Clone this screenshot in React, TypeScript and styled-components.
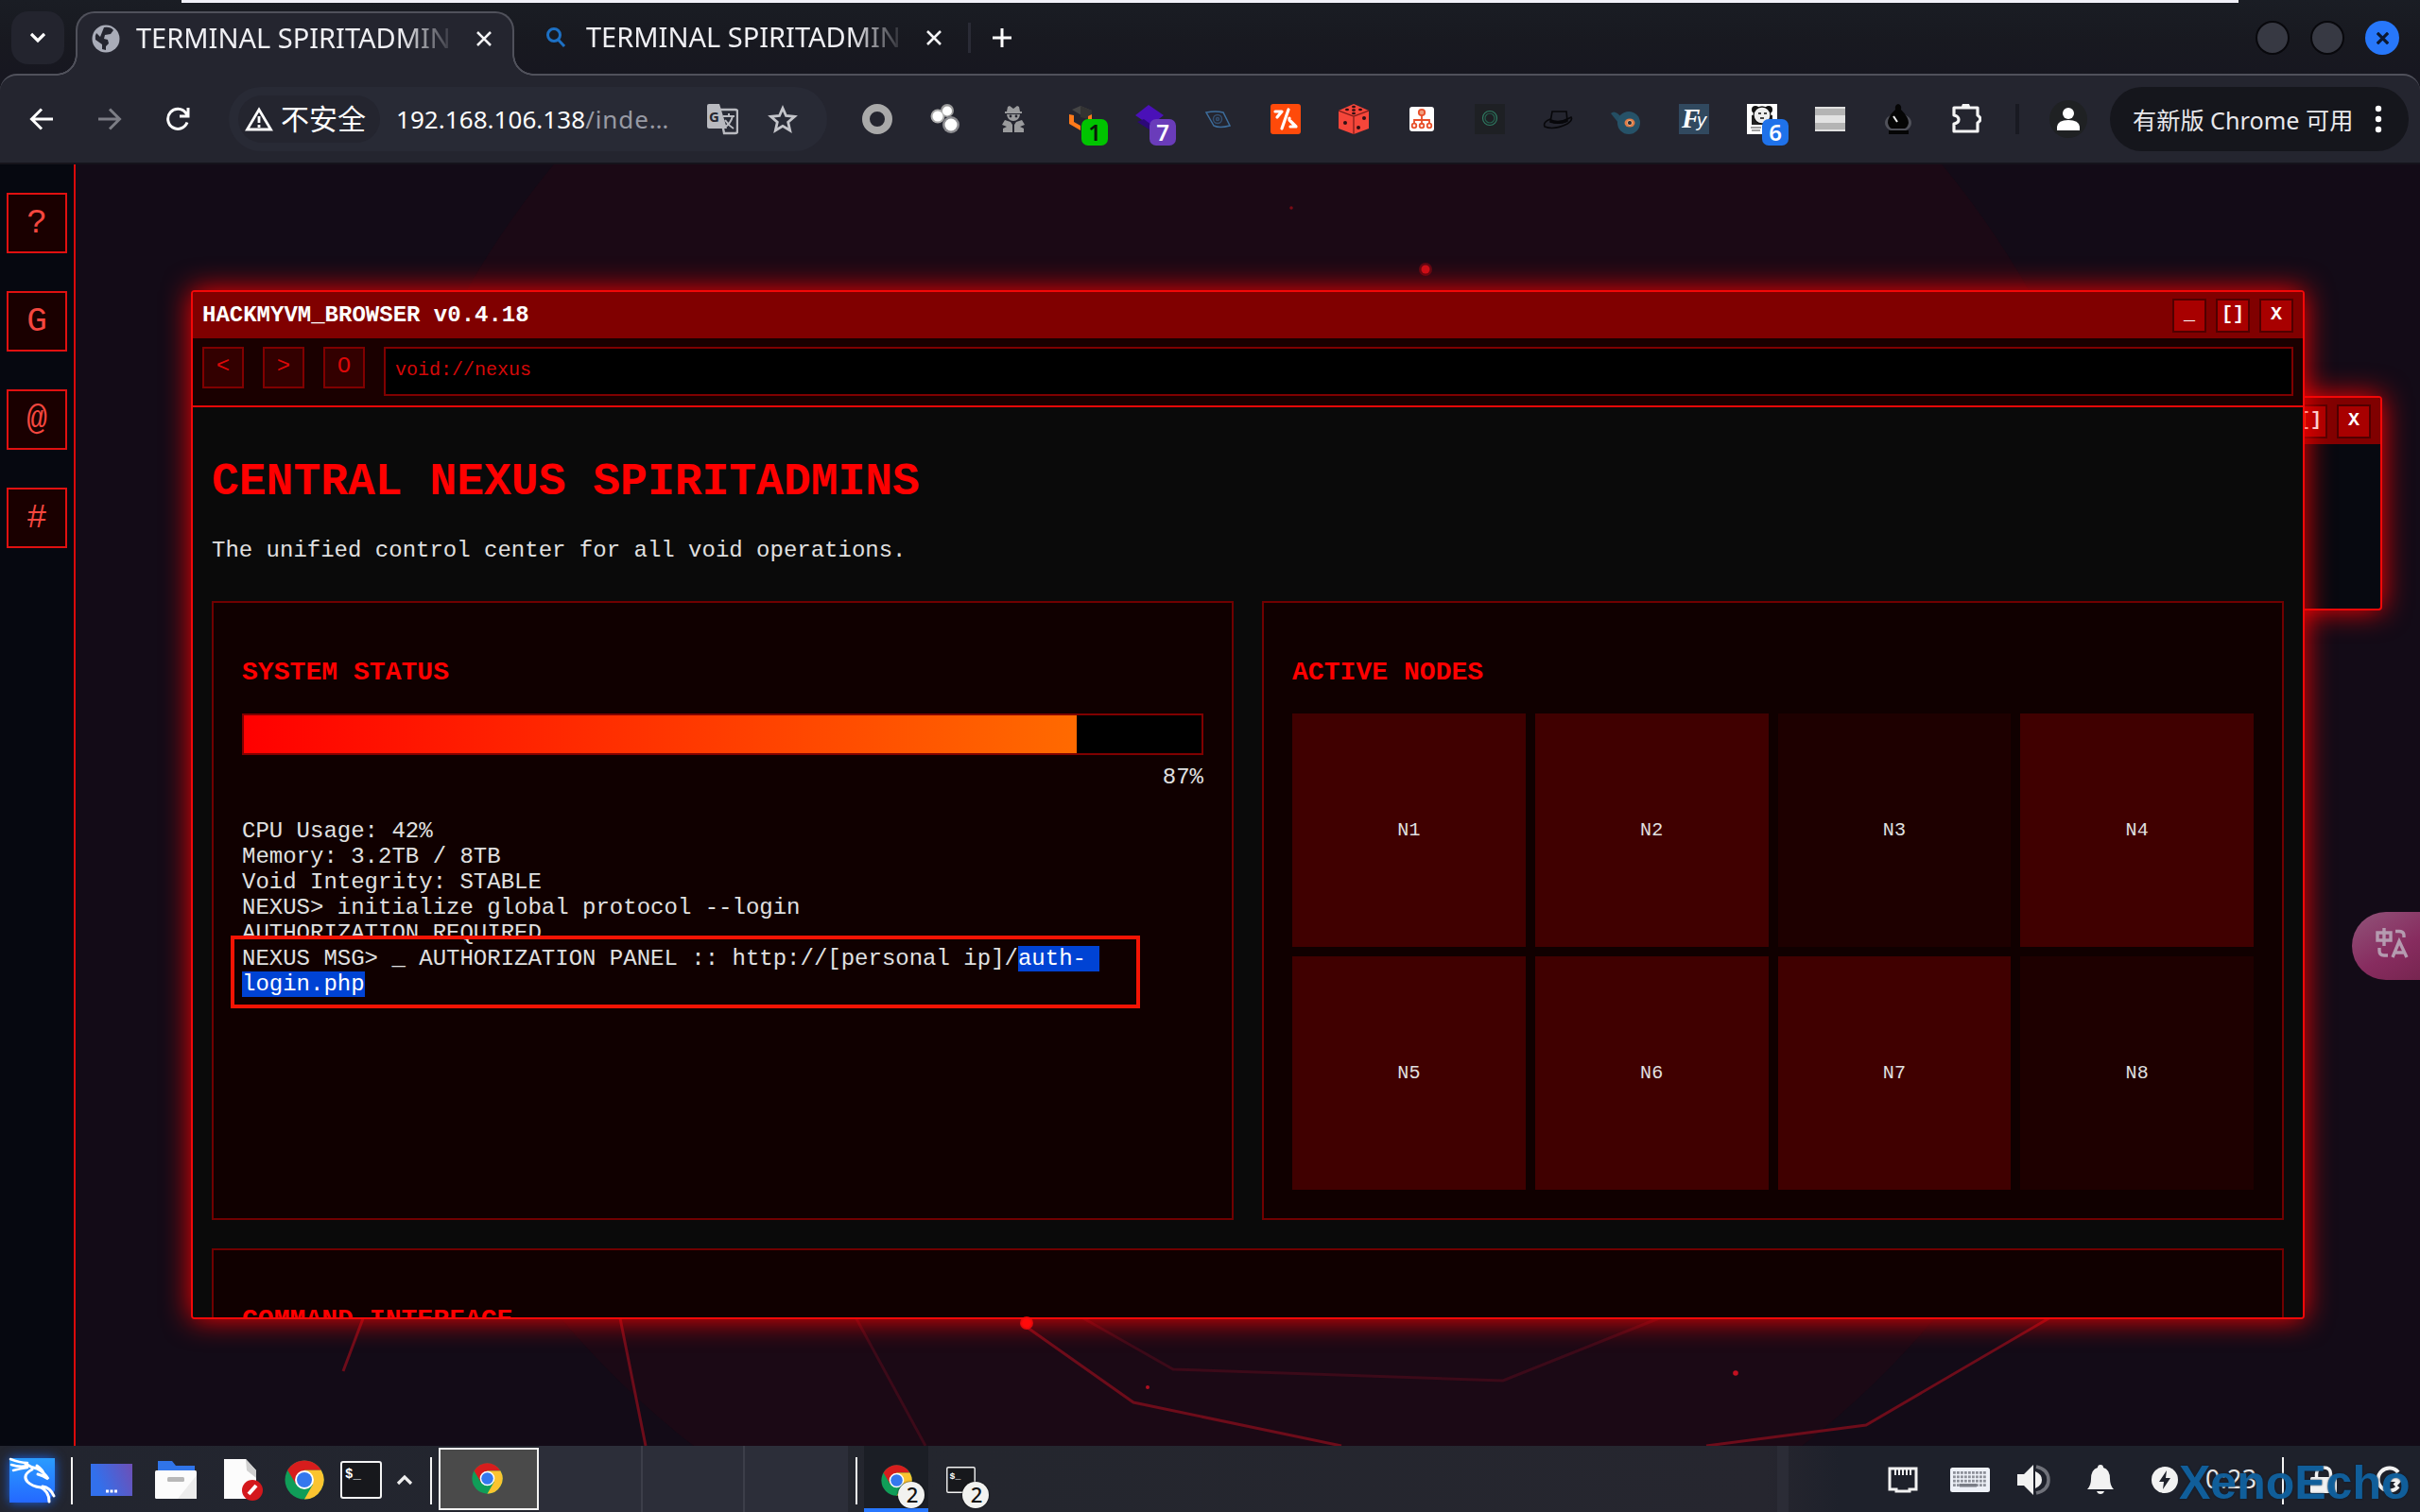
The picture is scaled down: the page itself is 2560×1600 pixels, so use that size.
import React from "react";
import styled, { createGlobalStyle, css } from "styled-components";

const mono = `"Liberation Mono", "Courier New", monospace`;
const sans = `"Noto Sans", "Noto Sans CJK SC", sans-serif`;

const GlobalStyle = createGlobalStyle`
  * { box-sizing: border-box; }
  html, body { margin: 0; padding: 0; background: #120b17; overflow: hidden; }
`;

const Screen = styled.div`
  position: relative;
  width: 2560px;
  height: 1600px;
  display: grid;
  grid-template-rows: 78px 96px 1356px 70px;
  overflow: hidden;
  font-family: ${sans};
  color: #fff;
`;

/* ---------- tab strip ---------- */

const TabStrip = styled.div`
  position: relative;
  display: flex;
  align-items: flex-start;
  background: linear-gradient(#1a1d24, #181920 55%, #171720);
`;

const TopEdge = styled.div`
  position: absolute;
  top: 0;
  left: 192px;
  width: 2176px;
  height: 3px;
  background: #f1f1f9;
`;

const TabSearch = styled.div`
  width: 56px;
  height: 56px;
  margin: 12px 0 0 12px;
  border-radius: 18px;
  background: #23242e;
  display: grid;
  place-items: center;
`;

const Tab = styled.div<{ $active?: boolean }>`
  position: relative;
  display: flex;
  align-items: center;
  height: 68px;
  width: 464px;
  margin: 12px 0 0 12px;
  padding: 0 0 12px 15px;
  ${(p) =>
    p.$active
      ? css`
          z-index: 2;
          background: #24252f;
          border: 2px solid #50515b;
          border-bottom: 0;
          border-radius: 20px 20px 0 0;
          &::before,
          &::after {
            content: "";
            position: absolute;
            bottom: 0;
            width: 22px;
            height: 22px;
          }
          &::before {
            left: -22px;
            background: radial-gradient(circle at 0 0, transparent 19.5px, #50515b 20px 21.5px, #24252f 22px);
          }
          &::after {
            right: -22px;
            background: radial-gradient(circle at 100% 0, transparent 19.5px, #50515b 20px 21.5px, #24252f 22px);
          }
        `
      : css`
          margin-left: 14px;
          padding-left: 18px;
        `}
`;

const TabTitle = styled.span<{ $ml: number }>`
  margin: -2px 0 0 ${(p) => p.$ml}px;
  width: 332px;
  overflow: hidden;
  white-space: nowrap;
  font-size: 29px;
  line-height: 40px;
  color: #f0f0f4;
  mask-image: linear-gradient(90deg, #000 280px, transparent 338px);
`;

const TabClose = styled.span<{ $ml: number }>`
  margin-left: ${(p) => p.$ml}px;
  display: flex;
`;

const StripDivider = styled.div`
  width: 3px;
  height: 32px;
  margin: 24px 0 0 2px;
  background: #2a2b36;
`;

const NewTab = styled.div`
  margin: 29px 0 0 22px;
  display: flex;
`;

const WindowButtons = styled.div`
  margin: 22px 22px 0 auto;
  display: flex;
  align-items: center;
  gap: 22px;
`;

const WindowDot = styled.div<{ $close?: boolean }>`
  width: 36px;
  height: 36px;
  border-radius: 50%;
  display: grid;
  place-items: center;
  background: ${(p) => (p.$close ? "#2777fa" : "#373943")};
  border: ${(p) => (p.$close ? "0" : "2px solid #08080c")};
`;

/* ---------- toolbar ---------- */

const Toolbar = styled.div`
  display: flex;
  align-items: center;
  padding: 0 12px 0 8px;
  background: #24252f;
  border-top: 2px solid #50515b;
  border-bottom: 2px solid #15131b;
  border-radius: 18px 18px 0 0;
`;

const ToolbarBack = styled.div`
  background: #171720;
  display: grid;
`;

const Slot = styled.div`
  position: relative;
  width: 72px;
  flex: none;
  height: 72px;
  display: grid;
  place-items: center;
`;

const Omnibox = styled.div`
  display: flex;
  align-items: center;
  flex: none;
  width: 633px;
  height: 68px;
  margin: 0 17px 0 18px;
  padding-left: 10px;
  border-radius: 34px;
  background: #282a35;
`;

const Security = styled.div`
  display: flex;
  align-items: center;
  gap: 8px;
  width: 150px;
  height: 50px;
  padding-left: 7px;
  border-radius: 25px;
  background: #24252f;
  font-size: 30px;
  line-height: 40px;
  white-space: nowrap;
`;

const Url = styled.div`
  margin-left: 17px;
  width: 328px;
  font-size: 26px;
  white-space: nowrap;
  color: #fff;
  letter-spacing: 0.05px;
  span { color: #989aa4; letter-spacing: 0.9px; }
`;

const OmniIcons = styled.div`
  display: flex;
  align-items: center;
  gap: 31px;
`;

const ExtBadge = styled.span<{ $bg: string; $fg: string }>`
  position: absolute;
  left: 36px;
  top: 36px;
  width: 28px;
  height: 28px;
  border-radius: 7px;
  background: ${(p) => p.$bg};
  color: ${(p) => p.$fg};
  font-size: 24px;
  font-weight: 600;
  line-height: 27px;
  text-align: center;
`;

const BarDivider = styled.div`
  width: 4px;
  height: 32px;
  margin: 0 32px 0 16px;
  background: #191a22;
`;

const Profile = styled.div`
  width: 40px;
  height: 40px;
  border-radius: 50%;
  background: #1f2123;
  display: grid;
  place-items: center;
`;

const UpdatePill = styled.div`
  display: flex;
  align-items: center;
  justify-content: space-between;
  flex: none;
  width: 316px;
  height: 68px;
  margin-left: 24px;
  padding: 0 28px 0 24px;
  border-radius: 34px;
  background: #15161c;
  font-size: 25.2px;
  white-space: nowrap;
  color: #e8e8ec;
`;

/* ---------- web page ---------- */

const Page = styled.div`
  position: relative;
  overflow: hidden;
  background: #130b17;
  font-family: ${mono};
`;

const Backdrop = styled.svg`
  position: absolute;
  inset: 0;
`;

const Spark = styled.div`
  position: absolute;
  left: 1079px;
  top: 1219px;
  width: 14px;
  height: 14px;
  border-radius: 50%;
  background: radial-gradient(#ff0a0a 40%, rgba(255, 10, 10, 0.4));
`;

const SideBar = styled.nav`
  position: relative;
  width: 80px;
  height: 100%;
  padding: 30px 7px;
  display: flex;
  flex-direction: column;
  gap: 40px;
  background: #060810;
  border-right: 2px solid #d90a0a;
`;

const SideButton = styled.div`
  width: 64px;
  height: 64px;
  border: 2px solid #e01010;
  background: #1a0000;
  color: #f4473f;
  font-size: 36px;
  line-height: 61px;
  text-align: center;
`;

const Win = styled.section<{ $x: number; $y: number; $w: number; $h: number }>`
  position: absolute;
  left: ${(p) => p.$x}px;
  top: ${(p) => p.$y}px;
  width: ${(p) => p.$w}px;
  height: ${(p) => p.$h}px;
  display: flex;
  flex-direction: column;
  overflow: hidden;
  border: 2px solid #f20808;
  border-radius: 4px;
  background: #070910;
  box-shadow: 0 0 30px #ff0000;
`;

const TitleBar = styled.header`
  flex: none;
  height: 49px;
  display: flex;
  align-items: center;
  padding: 0 10px;
  background: #800000;
  color: #fff;
  font-size: 24px;
  font-weight: bold;
`;

const TitleText = styled.span`
  flex: 1;
  padding-bottom: 1px;
`;

const TitleButtons = styled.div`
  display: flex;
  gap: 10px;
`;

const TitleButton = styled.span`
  width: 36px;
  height: 36px;
  border: 2px solid #500000;
  background: #a80000;
  font-size: 20px;
  line-height: 30px;
  text-align: center;
`;

const NavBar = styled.div`
  flex: none;
  height: 73px;
  display: flex;
  gap: 20px;
  padding: 9px 10px;
  background: #1a0000;
  border-bottom: 2px solid #e60808;
`;

const NavButton = styled.span`
  width: 44px;
  height: 44px;
  border: 2px solid #800000;
  background: #330000;
  color: #dd0808;
  font-size: 24px;
  line-height: 38px;
  text-align: center;
`;

const Address = styled.div`
  flex: 1;
  height: 52px;
  padding-left: 10px;
  border: 2px solid #800000;
  background: #000;
  color: #d40808;
  font-size: 20px;
  line-height: 46px;
`;

const Content = styled.div`
  flex: 1;
  min-height: 0;
  overflow: hidden;
  padding: 20px;
  background: #0a0a0a;
  color: #e0e0e0;
  font-size: 24px;
  line-height: 27px;
`;

const Heading = styled.h1`
  margin: 32px 0 32px;
  font-size: 48px;
  line-height: 54px;
  color: #ff0000;
`;

const Intro = styled.p`
  margin: 0 0 40px;
`;

const CardGrid = styled.div`
  display: grid;
  grid-template-columns: 1fr 1fr;
  gap: 30px;
`;

const Card = styled.div<{ $wide?: boolean }>`
  ${(p) => p.$wide && "grid-column: 1 / -1;"}
  border: 2px solid #700000;
  background: #100000;
  padding: 30px;
`;

const CardTitle = styled.h3`
  margin: 28px 0;
  font-size: 28.08px;
  line-height: 31px;
  color: #ff0000;
`;

const Meter = styled.div`
  height: 44px;
  border: 2px solid #800000;
  background: #000;
`;

const MeterFill = styled.div`
  height: 100%;
  background: linear-gradient(90deg, #ff0000, #ff6a00);
`;

const MeterLabel = styled.div`
  margin: 10px 0 30px;
  text-align: right;
`;

const Selected = styled.span`
  background: #0043d4;
  color: #fff;
  white-space: pre;
`;

const Message = styled.div`
  position: relative;
`;

const MarkBox = styled.div`
  position: absolute;
  left: -12px;
  top: -11px;
  width: 962px;
  height: 77px;
  border: 4px solid #f41404;
`;

const NodeGrid = styled.div`
  display: grid;
  grid-template-columns: repeat(4, 1fr);
  gap: 10px;
`;

const NodeCell = styled.div<{ $on: boolean }>`
  aspect-ratio: 1;
  display: grid;
  place-items: center;
  background: ${(p) => (p.$on ? "#400000" : "#1e0000")};
  font-size: 20px;
`;

const TranslateTab = styled.div`
  position: absolute;
  right: 0;
  top: 791px;
  width: 72px;
  height: 72px;
  padding: 17px 0 0 25px;
  border-radius: 36px 0 0 36px;
  background: linear-gradient(150deg, #91547a, #872c5f 60%, #772550);
`;

/* ---------- taskbar ---------- */

const TaskBar = styled.footer`
  position: relative;
  display: flex;
  align-items: center;
  background: linear-gradient(90deg, #22252f, #24262e 40%, #26262f 73%, #1e212b 76%);
`;

const TaskIcon = styled.div<{ $w: number; $ml?: number }>`
  position: relative;
  flex: none;
  width: ${(p) => p.$w}px;
  margin: 2px 0 0 ${(p) => p.$ml || 0}px;
  display: grid;
  place-items: center;
  svg { display: block; }
`;

const TaskRule = styled.div<{ $ml: number; $mr?: number }>`
  flex: none;
  width: 2px;
  height: 50px;
  margin: 4px ${(p) => p.$mr || 0}px 0 ${(p) => p.$ml}px;
  background: #f4f4f4;
`;

const Workspace = styled.div<{ $current?: boolean; $last?: boolean; $w: number }>`
  flex: none;
  height: 70px;
  width: ${(p) => p.$w}px;
  background: #2c2e39;
  border-right: ${(p) => (p.$last ? 0 : 2)}px solid #3c3e49;
  ${(p) =>
    p.$current &&
    css`
      height: 66px;
      display: grid;
      place-items: center;
      padding: 0 3px 2px 0;
      background: #4a4a4a;
      border: 2px solid #f2f2f2;
    `}
`;

const Task = styled.div<{ $active?: boolean; $w: number }>`
  position: relative;
  flex: none;
  width: ${(p) => p.$w}px;
  height: 70px;
  display: grid;
  place-items: center;
  background: ${(p) => (p.$active ? "#1b1e25" : "transparent")};
  border-bottom: 4px solid ${(p) => (p.$active ? "#2777ff" : "transparent")};
  padding-top: 6px;
`;

const CountBadge = styled.span`
  position: absolute;
  left: 36px;
  top: 38px;
  width: 28px;
  height: 28px;
  border-radius: 50%;
  background: #f2f2f0;
  box-shadow: 0 0 2px #000;
  color: #111;
  font-size: 22px;
  font-weight: 500;
  line-height: 27px;
  text-align: center;
  padding-left: 2px;
`;

const Strip = styled.div`
  width: 12px;
  height: 70px;
  margin-left: 830px;
  background: #2b2c36;
`;

const Clock = styled.div`
  width: 60px;
  margin: 0 0 2px 28px;
  font-size: 27px;
  letter-spacing: 0.2px;
  color: #e8e8e8;
`;

const Watermark = styled.div`
  position: absolute;
  left: 2305px;
  bottom: 3px;
  font: bold 50px/56px "Liberation Sans", Arial, sans-serif;
  color: rgba(18, 106, 172, 0.86);
  text-shadow: 0 0 2px #0a1a2c;
`;

/* ---------- icons ---------- */

const Cross = ({ s = 16, c = "#f4f4f6", w = 2.6 }) => (
  <svg width={s} height={s} viewBox="0 0 16 16" stroke={c} strokeWidth={w}>
    <path d="M1 1L15 15M15 1L1 15" />
  </svg>
);

const Chrome = ({ s }: { s: number }) => (
  <svg width={s} height={s} viewBox="0 0 44 44">
    <circle cx="22" cy="22" r="21.5" fill="#109d58" />
    <path d="M3.4 11.2A21.5 21.5 0 0 1 40.6 11.2H22L13 27.2Z" fill="#d71d1d" />
    <path d="M40.6 11.2A21.5 21.5 0 0 1 22 43.5L31.5 27 22 11.2Z" fill="#fbc430" />
    <circle cx="22" cy="22" r="10.4" fill="#fff" />
    <circle cx="22" cy="22" r="8.4" fill="#3478ee" />
  </svg>
);

const TerminalIcon = ({ w, h }: { w: number; h: number }) => (
  <svg width={w} height={h} viewBox="0 0 44 40">
    <rect x="1" y="1" width="42" height="38" rx="2" fill="#17181c" stroke="#f4f4f4" strokeWidth="2" />
    <text x="5" y="18" fontFamily="Liberation Mono" fontWeight="bold" fontSize="14" fill="#fff">$_</text>
  </svg>
);

const Ext = ({ children }: { children: React.ReactNode }) => (
  <svg width="32" height="32" viewBox="0 0 32 32" fill="none">{children}</svg>
);

const extensions: { icon: React.ReactNode; badge?: [string, string, string] }[] = [
  { icon: <circle cx="16" cy="16" r="12" stroke="#a9a9a9" strokeWidth="8" /> },
  {
    icon: (
      <>
        <circle cx="18" cy="7" r="7" fill="#999" /><circle cx="8" cy="13" r="7.5" fill="#aaa" /><circle cx="22" cy="22" r="9" fill="#8c8c90" />
        <circle cx="18" cy="7.5" r="5" fill="#fff" /><circle cx="8" cy="13" r="5.5" fill="#fff" /><circle cx="22" cy="22" r="6.5" fill="#fff" />
      </>
    ),
  },
  {
    icon: (
      <g fill="#9a9b9d">
        <path d="M10 3L12 2 16 5 20 2 22 3 23 8H25V10H7V8H9Z" />
        <path d="M9 11H23Q22 18 16 18 10 18 9 11Z" />
        <path d="M7 17L13 19 15 22V30H5V26L9 24 4 22Z" /><path d="M25 17L19 19 17 22V30H27V26L23 24 28 22Z" />
        <circle cx="13" cy="13" r="1.4" fill="#24252f" /><circle cx="19" cy="13" r="1.4" fill="#24252f" />
      </g>
    ),
  },
  {
    icon: (
      <>
        <path d="M6 6L15 2 27 7V17L16 12Z" fill="#454545" /><path d="M15 2V14L27 17V7Z" fill="#333" />
        <path d="M3 11V21L15 28V23L8 19V12Z" fill="#ff7a1a" /><path d="M27 11V20H23V13Z" fill="#ff7a1a" />
      </>
    ),
    badge: ["1", "#00c400", "#0a1a0a"],
  },
  {
    icon: (<><path d="M1 12L15 1 31 12 17 23Z" fill="#4a10b8" /><path d="M3 19L10 16 26 28 22 31Z" fill="#2c0878" /></>),
    badge: ["7", "#6a3cba", "#fff"],
  },
  {
    icon: (
      <g stroke="#3d6d9c" strokeWidth="1.5">
        <path d="M4 9Q14 7 22 9L29 23Q18 26 12 23Z" /><circle cx="16" cy="16" r="4.500" strokeOpacity="0.6" /><circle cx="16" cy="16" r="1.500" strokeOpacity="0.6" />
      </g>
    ),
  },
  {
    icon: (
      <>
        <rect width="32" height="32" rx="3" fill="#ff4a0a" />
        <path d="M5 8H12L7 14M19 6L12 26M20 15V17L27 24H21" stroke="#fff" strokeWidth="3.200" strokeLinecap="round" strokeLinejoin="round" />
      </>
    ),
  },
  {
    icon: (
      <>
        <path d="M16 0L32 7V26L16 32 0 26V7Z" fill="#f5463a" />
        <path d="M0 7L16 13 32 7M16 13V32" stroke="#7a1b18" strokeWidth="1.2" />
        <g fill="#301014">
          <ellipse cx="16" cy="3" rx="2" ry="1.2" /><ellipse cx="9" cy="6" rx="2" ry="1.2" /><ellipse cx="16" cy="6.5" rx="2" ry="1.2" />
          <ellipse cx="23" cy="6" rx="2" ry="1.2" /><ellipse cx="16" cy="10" rx="2" ry="1.2" />
          <circle cx="7" cy="20" r="2" /><circle cx="21" cy="25" r="2" /><circle cx="27" cy="15" r="2" />
        </g>
      </>
    ),
  },
  {
    icon: (
      <>
        <rect x="3" y="3" width="26" height="26" rx="3" fill="#fff" />
        <g stroke="#e8502a" strokeWidth="1.8">
          <circle cx="16" cy="9" r="3.2" fill="#f0a080" /><path d="M16 12V22M8 21V17H24V21" />
          <circle cx="8" cy="23" r="2.3" /><circle cx="16" cy="23" r="2.3" /><circle cx="24" cy="23" r="2.3" />
        </g>
      </>
    ),
  },
  {
    icon: (
      <>
        <rect width="32" height="32" fill="#1e2024" />
        <circle cx="16" cy="15" r="7.5" stroke="#2f7a62" strokeWidth="1.2" /><circle cx="16" cy="15" r="5" stroke="#24614e" strokeWidth="1.2" />
      </>
    ),
  },
  {
    icon: (
      <>
        <path d="M8 19L10 8H25L26 18Q17 22 8 19Z" fill="#24252f" stroke="#07070a" strokeWidth="1.6" />
        <path d="M8 16Q17 20 26 15V19Q17 23 8 19Z" fill="#07070a" />
        <path d="M8 16Q0 19 2 24 12 28 26 21 32 17 30 14L26 16" stroke="#07070a" strokeWidth="1.6" />
      </>
    ),
  },
  {
    icon: (
      <>
        <path d="M0 10Q3 7 7 10L13 15 8 20Z" fill="#244e63" /><circle cx="19" cy="20" r="12" fill="#265268" />
        <ellipse cx="20" cy="20" rx="5.500" ry="4.500" fill="#e07b45" /><circle cx="20" cy="20" r="2.6" fill="#24303c" stroke="#f4b080" />
      </>
    ),
  },
  {
    icon: (
      <>
        <rect width="32" height="32" fill="#31495f" />
        <text x="3" y="25" fontFamily="Liberation Serif" fontStyle="italic" fontWeight="bold" fontSize="29" fill="#fff">F</text>
        <text x="19" y="24" fontFamily="Liberation Sans" fontStyle="italic" fontSize="20" fill="#fff">y</text>
      </>
    ),
  },
  {
    icon: (
      <>
        <rect width="32" height="32" fill="#fff" />
        <circle cx="9" cy="6" r="4" fill="#111" /><circle cx="23" cy="6" r="4" fill="#111" />
        <rect x="5" y="12" width="22" height="10" fill="#222" />
        <circle cx="16" cy="12" r="9" fill="#eee" stroke="#111" strokeWidth="1.3" />
        <path d="M12 10h3M18 10h3M14 15h4" stroke="#444" strokeWidth="2" /><path d="M4 25H15M5 28H14" stroke="#444" />
      </>
    ),
    badge: ["6", "#1f72ea", "#fff"],
  },
  {
    icon: (
      <>
        <rect y="3" width="32" height="26" fill="#b4b4b4" /><rect y="12" width="32" height="8" fill="#e2e2e2" />
        <path d="M0 4H32M0 28H32" stroke="#eee" strokeWidth="1.5" />
      </>
    ),
  },
  {
    icon: (
      <>
        <ellipse cx="16" cy="20" rx="14" ry="10" fill="#50515a" />
        <path d="M16 0Q20 1 19 6 27 14 27 20 26 25 23 26H9Q6 25 5 20 5 13 13 6 12 1 16 0Z" fill="#050505" />
        <path d="M11 13L15 19" stroke="#eee" strokeWidth="2" /><rect x="6" y="28" width="21" height="4" fill="#050505" />
      </>
    ),
  },
  {
    icon: (
      <>
        <path d="M3 4H28V12Q31 14 31 16T28 20V29H3V21Q8 20 8 16.500T3 12Z" stroke="#f4f4f4" strokeWidth="3.2" strokeLinejoin="round" />
        <path d="M11 3Q12 -2 15.500 -2T20 3Z" fill="#f4f4f4" />
      </>
    ),
  },
];

const keys = [0, 1, 2, 3].flatMap((r) => Array.from({ length: 9 }, (_, c) => [3 + c * 4, 4 + r * 4.4]));

const nodes = [true, true, false, true, true, true, true, false];

export default function App() {
  return (
    <Screen>
      <GlobalStyle />
      <TabStrip>
        <TabSearch>
          <svg width="16" height="12" viewBox="0 0 16 12" fill="none" stroke="#fff" strokeWidth="3.2"><path d="M1 2L8 9 15 2" /></svg>
        </TabSearch>
        <Tab $active>
          <svg width="30" height="30" viewBox="0 0 30 30">
            <circle cx="15" cy="15" r="14.500" fill="#a9acb8" />
            <path d="M13 3Q20 2 23 6L20 10 14 11 13 15 17 16 18 20 15 23V27L11 26V21L4 16Q3 12 5 9L9 13 11 8Z" fill="#24252f" />
            <path d="M15 13L22 11 25 15 22 20 19 18Z" fill="#a9acb8" />
          </svg>
          <TabTitle $ml={17}>TERMINAL SPIRITADMIN</TabTitle>
          <TabClose $ml={28}><Cross /></TabClose>
        </Tab>
        <Tab>
          <svg width="24" height="24" viewBox="0 0 24 24" fill="none" stroke="#1d70c4" strokeWidth="3"><circle cx="10" cy="9" r="6.500" /><path d="M14.500 14L21 21" /></svg>
          <TabTitle $ml={20}>TERMINAL SPIRITADMIN</TabTitle>
          <TabClose $ml={28}><Cross /></TabClose>
        </Tab>
        <StripDivider />
        <NewTab>
          <svg width="22" height="22" viewBox="0 0 22 22" stroke="#fff" strokeWidth="3"><path d="M11 1V21M1 11H21" /></svg>
        </NewTab>
        <WindowButtons>
          <WindowDot /><WindowDot /><WindowDot $close><Cross s={13} c="#0c1830" w={4} /></WindowDot>
        </WindowButtons>
        <TopEdge />
      </TabStrip>

      <ToolbarBack>
        <Toolbar>
          <Slot><svg width="26" height="24" viewBox="0 0 26 24" fill="none" stroke="#fff" strokeWidth="3"><path d="M25 12H2.500M13 1.500L2.500 12 13 22.500" /></svg></Slot>
          <Slot><svg width="26" height="24" viewBox="0 0 26 24" fill="none" stroke="#7c7d85" strokeWidth="3"><path d="M1 12H23.500M13 1.500L23.500 12 13 22.500" /></svg></Slot>
          <Slot><svg width="26" height="26" viewBox="0 0 26 26" fill="none" stroke="#fff" strokeWidth="3"><path d="M23 16.500A10.500 10.500 0 1 1 21.500 6.500L24 10M24 1V10H15" /></svg></Slot>
          <Omnibox>
            <Security>
              <svg width="30" height="26" viewBox="0 0 30 26" fill="none" stroke="#fff" strokeWidth="2.800"><path d="M15 3L27.500 24H2.500ZM15 10V17M15 19V22" /></svg>
              不安全
            </Security>
            <Url>192.168.106.138<span>/inde…</span></Url>
            <OmniIcons>
              <svg width="34" height="34" viewBox="0 0 34 34">
                <path d="M14 7H31Q33 7 33 9V30Q33 32 31 32H19Z" fill="none" stroke="#b9bac0" strokeWidth="2.400" />
                <path d="M3 1H14L22 27H3Q1 27 1 25V3Q1 1 3 1Z" fill="#b9bac0" />
                <text x="3" y="20" fontFamily="Noto Sans" fontWeight="bold" fontSize="15" fill="#24252f">G</text>
                <path d="M18 14H30M24 11V14M28 14Q26 22 19 26M20 18Q24 24 29 27" fill="none" stroke="#b9bac0" strokeWidth="2" />
              </svg>
              <svg width="32" height="30" viewBox="0 0 32 30" fill="none" stroke="#c4c5ca" strokeWidth="2.800"><path d="M16 3.500L19.500 11.500 28.500 12.300 21.700 18.200 23.700 27 16 22.300 8.300 27 10.300 18.200 3.500 12.300 12.500 11.500Z" /></svg>
            </OmniIcons>
          </Omnibox>
          {extensions.map((e, i) => (
            <Slot key={i}>
              <Ext>{e.icon}</Ext>
              {e.badge && <ExtBadge $bg={e.badge[1]} $fg={e.badge[2]}>{e.badge[0]}</ExtBadge>}
            </Slot>
          ))}
          <BarDivider />
          <Profile>
            <svg width="24" height="26" viewBox="0 0 24 26" fill="#fff"><circle cx="12" cy="7" r="6" /><path d="M0 25V21Q1 14 12 14T24 21V25Z" /></svg>
          </Profile>
          <UpdatePill>
            有新版 Chrome 可用
            <svg width="8" height="30" viewBox="0 0 8 30" fill="#fff"><circle cx="4" cy="4" r="3.200" /><circle cx="4" cy="15" r="3.200" /><circle cx="4" cy="26" r="3.200" /></svg>
          </UpdatePill>
        </Toolbar>
      </ToolbarBack>

      <Page>
        <Backdrop width="2560" height="1356" viewBox="0 174 2560 1356" fill="none">
          <circle cx="1320" cy="780" r="952" fill="#1b0915" />
          <g stroke="#6d0c1a" strokeWidth="3">
            <path d="M386 1390L363 1451M655 1390L683 1530M1080 1400L1199 1484 1419 1530M2176 1390L1974 1508 1805 1530" />
          </g>
          <g stroke="#3c0a19" strokeWidth="3">
            <path d="M903 1390L979 1530M1146 1395L1241 1449 1590 1461 1760 1393" />
          </g>
          <circle cx="1508" cy="285" r="7" fill="#5a0813" /><circle cx="1508" cy="285" r="4.500" fill="#c80f18" />
          <circle cx="1366" cy="220" r="1.800" fill="#7a0c16" />
          <circle cx="1214" cy="1468" r="2" fill="#b01020" /><circle cx="1836" cy="1453" r="2.800" fill="#c41020" />
        </Backdrop>
        <SideBar>
          {["?", "G", "@", "#"].map((c) => <SideButton key={c}>{c}</SideButton>)}
        </SideBar>

        <Win $x={1880} $y={245} $w={640} $h={227}>
          <TitleBar>
            <TitleText />
            <TitleButtons><TitleButton>_</TitleButton><TitleButton>[]</TitleButton><TitleButton>X</TitleButton></TitleButtons>
          </TitleBar>
        </Win>

        <Win $x={202} $y={133} $w={2236} $h={1089}>
          <TitleBar>
            <TitleText>HACKMYVM_BROWSER v0.4.18</TitleText>
            <TitleButtons><TitleButton>_</TitleButton><TitleButton>[]</TitleButton><TitleButton>X</TitleButton></TitleButtons>
          </TitleBar>
          <NavBar>
            <NavButton>&lt;</NavButton><NavButton>&gt;</NavButton><NavButton>O</NavButton>
            <Address>void://nexus</Address>
          </NavBar>
          <Content>
            <Heading>CENTRAL NEXUS SPIRITADMINS</Heading>
            <Intro>The unified control center for all void operations.</Intro>
            <CardGrid>
              <Card>
                <CardTitle>SYSTEM STATUS</CardTitle>
                <Meter><MeterFill style={{ width: "87%" }} /></Meter>
                <MeterLabel>87%</MeterLabel>
                <div>CPU Usage: 42%</div>
                <div>Memory: 3.2TB / 8TB</div>
                <div>Void Integrity: STABLE</div>
                <div>NEXUS&gt; initialize global protocol --login</div>
                <div>AUTHORIZATION REQUIRED</div>
                <Message>
                  NEXUS MSG&gt; _ AUTHORIZATION PANEL :: http://[personal ip]/<Selected>auth- </Selected><br />
                  <Selected>login.php</Selected>
                  <MarkBox />
                </Message>
              </Card>
              <Card>
                <CardTitle>ACTIVE NODES</CardTitle>
                <NodeGrid>
                  {nodes.map((on, i) => <NodeCell key={i} $on={on}>N{i + 1}</NodeCell>)}
                </NodeGrid>
              </Card>
              <Card $wide>
                <CardTitle>COMMAND INTERFACE</CardTitle>
              </Card>
            </CardGrid>
          </Content>
        </Win>

        <Spark />

        <TranslateTab>
          <svg width="35" height="32" viewBox="0 0 35 32" fill="none" stroke="#b59bb0" strokeWidth="3.400">
            <path d="M2 5H16V13H2ZM9 0V19M21 3.500H25Q30 3.500 30 8V10M4 21V24Q4 29 9 29H13" />
            <path d="M18 31L25 14 33 31M20.500 26H30" />
          </svg>
        </TranslateTab>
      </Page>

      <TaskBar>
        <TaskIcon $w={50} $ml={9}>
          <svg width="50" height="50" viewBox="0 0 50 50" fill="none" stroke="#fff" strokeLinecap="round" style={{ overflow: "visible", filter: "drop-shadow(0 0 6px #1b62e8)" }}>
            <defs><linearGradient id="kali" x2="0" y2="1"><stop stopColor="#2a9cff" /><stop offset="1" stopColor="#2468ff" /></linearGradient></defs>
            <path d="M1 2H49V36L42 49H1Z" fill="url(#kali)" stroke="none" />
            <path d="M2 3Q12 7 20 7M3 9Q12 12 20 10M5 15Q12 13 20 12" strokeWidth="2.600" />
            <path d="M18 8Q24 12 30 13 38 17 42 24 36 20 31 19M30 10Q36 14 38 20" strokeWidth="3" />
            <path d="M25 14Q14 20 20 27 25 32 34 33 43 37 43 48M36 32Q44 33 48 42" strokeWidth="3" />
          </svg>
        </TaskIcon>
        <TaskRule $ml={16} />
        <TaskIcon $w={44} $ml={19}>
          <svg width="44" height="34" viewBox="0 0 44 34">
            <defs><linearGradient id="desk" x2="1" y2="-0.300"><stop stopColor="#3270ec" /><stop offset="1" stopColor="#744cb0" /></linearGradient></defs>
            <rect width="44" height="34" fill="url(#desk)" /><path d="M16 29H28" stroke="#fff" strokeWidth="3" strokeDasharray="3 1.500" />
          </svg>
        </TaskIcon>
        <TaskIcon $w={44} $ml={24}>
          <svg width="44" height="40" viewBox="0 0 44 40">
            <path d="M3 0H18L22 5H42V14H3Z" fill="#3074e8" /><rect y="10" width="44" height="30" rx="1.500" fill="#fcfcfc" />
            <path d="M44 15V40H24Z" fill="#ececec" /><rect x="13" y="17" width="18" height="5" rx="1.500" fill="#b8b8b8" />
          </svg>
        </TaskIcon>
        <TaskIcon $w={42} $ml={29}>
          <svg width="42" height="44" viewBox="0 0 42 44">
            <path d="M0 0H23L34 12V42H0Z" fill="#fcfcfc" /><path d="M23 0L34 12V20L24 12Z" fill="#d0d0d0" />
            <circle cx="30" cy="33" r="11" fill="#d4181c" /><path d="M26 37L34 28" stroke="#fff" strokeWidth="4" />
          </svg>
        </TaskIcon>
        <TaskIcon $w={44} $ml={21}><Chrome s={42} /></TaskIcon>
        <TaskIcon $w={44} $ml={16}><TerminalIcon w={44} h={40} /></TaskIcon>
        <TaskIcon $w={18} $ml={15}>
          <svg width="18" height="12" viewBox="0 0 18 12" fill="none" stroke="#eee" strokeWidth="3.200"><path d="M2 10L9 3 16 10" /></svg>
        </TaskIcon>
        <TaskRule $ml={18} $mr={7} />
        <Workspace $current $w={106}><Chrome s={33} /></Workspace>
        <Workspace $w={110} />
        <Workspace $w={108} />
        <Workspace $w={109} $last />
        <TaskRule $ml={8} $mr={7} />
        <Task $active $w={68}><Chrome s={33} /><CountBadge>2</CountBadge></Task>
        <Task $w={68}><TerminalIcon w={31} h={28} /><CountBadge>2</CountBadge></Task>
        <Strip />
        <TaskIcon $w={32} $ml={105}>
          <svg width="32" height="28" viewBox="0 0 32 28" fill="none" stroke="#f2f2f2" strokeWidth="3">
            <path d="M2 2H30V24H23V26H9V24H2Z" /><path d="M8 3V9M12 3V9M16 3V9M20 3V9M24 3V9" strokeWidth="2" />
          </svg>
        </TaskIcon>
        <TaskIcon $w={42} $ml={34}>
          <svg width="42" height="26" viewBox="0 0 42 26">
            <rect width="42" height="26" rx="2.500" fill="#eef1f8" />
            {keys.map(([x, y], i) => <rect key={i} x={x} y={y} width="2.800" height="2.800" fill="#8d9099" />)}
            <rect x="10" y="17" width="18" height="3.500" fill="#7a7d86" />
          </svg>
        </TaskIcon>
        <TaskIcon $w={36} $ml={29}>
          <svg width="36" height="32" viewBox="0 0 36 32">
            <path d="M0 10H7L17 0V32L7 22H0Z" fill="#f2f2f2" /><path d="M19 7Q26 10 26 16T19 25Z" fill="#f2f2f2" />
            <path d="M20 2Q33 5 33 16T20 30" fill="none" stroke="#70727a" strokeWidth="3.500" />
          </svg>
        </TaskIcon>
        <TaskIcon $w={30} $ml={37}>
          <svg width="30" height="32" viewBox="0 0 30 32" fill="#f2f2f2">
            <path d="M15 0Q18 0 18 3 25 5 25 15 25 22 29 26H1Q5 22 5 15 5 5 12 3 12 0 15 0ZM11 28H19Q18 31 15 31T11 28Z" />
          </svg>
        </TaskIcon>
        <TaskIcon $w={30} $ml={38}>
          <svg width="30" height="30" viewBox="0 0 30 30"><circle cx="15" cy="15" r="14" fill="#f2f2f2" /><path d="M17 5L9 17H14L13 25 21 13H16Z" fill="#1e212b" /></svg>
        </TaskIcon>
        <Clock>0:23</Clock>
        <TaskRule $ml={21} />
        <TaskIcon $w={28} $ml={28}>
          <svg width="28" height="30" viewBox="0 0 28 30"><rect y="12" width="28" height="17" rx="1.500" fill="#f2f2f2" /><path d="M6.500 13V9Q6.500 2 14 2T21.500 9V13" fill="none" stroke="#f2f2f2" strokeWidth="3.500" /></svg>
        </TaskIcon>
        <TaskIcon $w={32} $ml={39}>
          <svg width="32" height="30" viewBox="0 0 32 30" fill="none" stroke="#f2f2f2" strokeWidth="4"><path d="M26 7A12 12 0 1 0 26 22M15 15H28M22 9L28 15 22 21" /></svg>
        </TaskIcon>
        <Watermark>XenoEcho</Watermark>
      </TaskBar>
    </Screen>
  );
}
